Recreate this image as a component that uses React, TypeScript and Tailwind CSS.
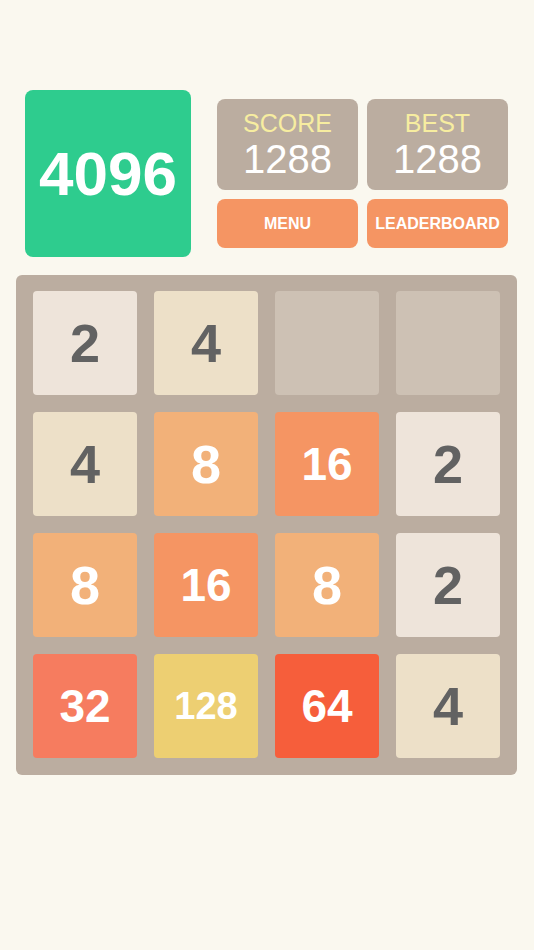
const BOARD: number[][] = [
  [2, 4, 0, 0],
  [4, 8, 16, 2],
  [8, 16, 8, 2],
  [32, 128, 64, 4],
];

const TILE_STYLE: Record<number, string> = {
  0: "bg-[#cdc1b4]",
  2: "bg-[#eee4da] text-[#626262] text-[54px]",
  4: "bg-[#ede0c8] text-[#626262] text-[54px]",
  8: "bg-[#f2b179] text-white text-[54px]",
  16: "bg-[#f59563] text-white text-[46px]",
  32: "bg-[#f67c5f] text-white text-[46px]",
  64: "bg-[#f65e3b] text-white text-[46px]",
  128: "bg-[#edcf72] text-white text-[38px]",
};

function Tile({ value }: { value: number }) {
  return (
    <div
      className={`w-[104px] h-[104px] rounded-[4px] flex items-center justify-center font-bold leading-none ${TILE_STYLE[value]}`}
    >
      {value > 0 ? value : ""}
    </div>
  );
}

function ScoreBox({ label, value }: { label: string; value: number }) {
  return (
    <div className="h-[91px] rounded-[8px] bg-[#bbada0] flex flex-col items-center justify-center">
      <span className="text-[25px] leading-none text-[#f7eda0]">{label}</span>
      <span className="text-[40px] leading-none text-white mt-[3px]">{value}</span>
    </div>
  );
}

function Button({ label }: { label: string }) {
  return (
    <button className="h-[49px] rounded-[8px] bg-[#f59563] text-white font-bold text-[16px] flex items-center justify-center">
      {label}
    </button>
  );
}

export default function App() {
  return (
    <div
      className="w-[534px] h-[950px] bg-[#faf8ef] pt-[90px]"
      style={{ fontFamily: '"Liberation Sans", Arial, sans-serif' }}
    >
      {/* Header */}
      <div className="flex items-start ml-[25px]">
        <div className="w-[166px] h-[167px] rounded-[8px] bg-[#2ecc8e] flex items-center justify-center text-white font-bold text-[62px] leading-none">
          4096
        </div>
        <div className="ml-[26px] mt-[9px] grid grid-cols-[141px_141px] content-start gap-[9px]">
          <ScoreBox label="SCORE" value={1288} />
          <ScoreBox label="BEST" value={1288} />
          <Button label="MENU" />
          <Button label="LEADERBOARD" />
        </div>
      </div>

      {/* Board */}
      <div className="mt-[18px] ml-[16px] w-[501px] h-[500px] rounded-[6px] bg-[#bbada0] px-[17px] pt-[16px] grid grid-cols-[repeat(4,104px)] grid-rows-[repeat(4,104px)] gap-[17px]">
        {BOARD.flat().map((v, i) => (
          <Tile key={i} value={v} />
        ))}
      </div>
    </div>
  );
}
